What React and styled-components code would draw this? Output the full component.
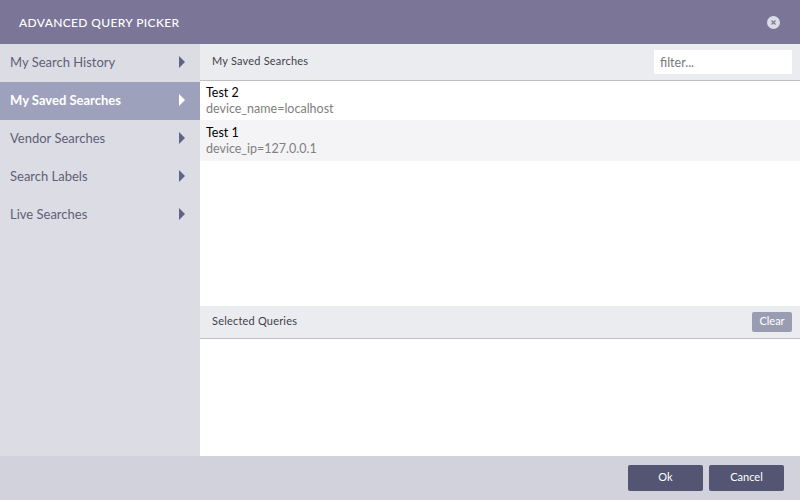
import React from 'react';
import styled, { createGlobalStyle } from 'styled-components'

const GlobalStyle = createGlobalStyle`
  html, body {
    margin: 0;
    padding: 0;
    background: #fff;
    font-family: Lato, "Liberation Sans", sans-serif;
  }
`

const Dialog = styled.div`
  width: 800px;
  height: 500px;
  display: flex;
  flex-direction: column;
  overflow: hidden;
`

const Header = styled.div`
  height: 44px;
  flex: none;
  display: flex;
  align-items: center;
  justify-content: space-between;
  padding: 0 20px 0 19px;
  background: #7b7698;
`

const Title = styled.h1`
  margin: 0;
  font-size: 12px;
  font-weight: 500;
  letter-spacing: 0.36px;
  color: #fff;
`

const CloseButton = styled.button`
  width: 13px;
  height: 13px;
  padding: 0;
  border: none;
  border-radius: 50%;
  background: #dcdce4;
  display: flex;
  align-items: center;
  justify-content: center;
`

const Body = styled.div`
  flex: 1;
  display: flex;
  min-height: 0;
`

const Sidebar = styled.ul`
  width: 200px;
  flex: none;
  margin: 0;
  padding: 0;
  list-style: none;
  background: #dcdce4;
`

const SidebarItem = styled.li`
  height: 38px;
  display: flex;
  align-items: center;
  justify-content: space-between;
  padding: 0 15px 2px 10px;
  box-sizing: border-box;
  font-size: 13px;
  font-weight: ${props => (props.$active ? 700 : 400)};
  color: ${props => (props.$active ? '#fff' : '#5f5f78')};
  background: ${props => (props.$active ? '#9ea1bb' : 'transparent')};
`

const Arrow = styled.span`
  width: 0;
  height: 0;
  margin-bottom: 1px;
  border-top: 6px solid transparent;
  border-bottom: 6px solid transparent;
  border-left: 6px solid ${props => (props.$active ? '#fff' : '#5d6488')};
`

const Content = styled.div`
  flex: 1;
  display: flex;
  flex-direction: column;
  min-width: 0;
`

const SavedPanel = styled.div`
  height: 262px;
  flex: none;
`

const SelectedPanel = styled.div`
  flex: 1;
`

const PanelBar = styled.div`
  height: ${props => props.$height}px;
  box-sizing: content-box;
  display: flex;
  align-items: center;
  justify-content: space-between;
  padding: 0 8px 0 12px;
  background: #ebecf0;
  border-bottom: 1px solid #bfbfbf;
`

const PanelTitle = styled.span`
  margin-bottom: 3px;
  font-size: 11px;
  letter-spacing: 0.2px;
  color: #3f3f4c;
`

const FilterInput = styled.input`
  width: 138px;
  height: 24px;
  box-sizing: border-box;
  padding: 0 6px;
  border: none;
  outline: none;
  background: #fff;
  font-family: inherit;
  font-size: 12.5px;
  color: #666;

  &::placeholder {
    color: #777;
    opacity: 1;
  }
`

const ClearButton = styled.button`
  width: 40px;
  height: 20px;
  padding: 0 0 3px;
  border: none;
  border-radius: 2px;
  background: #9a9cb1;
  color: #fff;
  font-family: inherit;
  font-size: 11px;
`

const SearchRow = styled.div`
  height: ${props => props.$height}px;
  box-sizing: border-box;
  padding: ${props => props.$top}px 6px 0;
  background: ${props => (props.$striped ? '#f4f4f6' : '#fff')};
`

const SearchName = styled.div`
  font-size: 12.5px;
  line-height: 16px;
  color: #000;
`

const SearchQuery = styled.div`
  font-size: 12.5px;
  line-height: 16px;
  color: #808080;
`

const Footer = styled.div`
  height: 44px;
  flex: none;
  display: flex;
  align-items: center;
  justify-content: flex-end;
  gap: 6px;
  padding-right: 16px;
  background: #d2d2dc;
`

const FooterButton = styled.button`
  width: 75px;
  height: 26px;
  padding: 0 0 3px;
  border: none;
  border-radius: 2px;
  background: #535572;
  color: #fff;
  font-family: inherit;
  font-size: 11px;
`

const menu = ['My Search History', 'My Saved Searches', 'Vendor Searches', 'Search Labels', 'Live Searches']

const searches = [
  { name: 'Test 2', query: 'device_name=localhost', height: 39, top: 4 },
  { name: 'Test 1', query: 'device_ip=127.0.0.1', height: 41, top: 5, striped: true },
]

export default function App() {
  return (
    <Dialog>
      <GlobalStyle />
      <Header>
        <Title>ADVANCED QUERY PICKER</Title>
        <CloseButton aria-label="Close">
          <svg width="5" height="5" viewBox="0 0 5 5">
            <path d="M0.5 0.5L4.5 4.5M4.5 0.5L0.5 4.5" stroke="#7b7698" strokeWidth="1.2" fill="none" />
          </svg>
        </CloseButton>
      </Header>
      <Body>
        <Sidebar>
          {menu.map((label) => (
            <SidebarItem key={label} $active={label === 'My Saved Searches'}>
              {label}
              <Arrow $active={label === 'My Saved Searches'} />
            </SidebarItem>
          ))}
        </Sidebar>
        <Content>
          <SavedPanel>
            <PanelBar $height={36}>
              <PanelTitle>My Saved Searches</PanelTitle>
              <FilterInput placeholder="filter..." />
            </PanelBar>
            {searches.map((search) => (
              <SearchRow key={search.name} $height={search.height} $top={search.top} $striped={search.striped}>
                <SearchName>{search.name}</SearchName>
                <SearchQuery>{search.query}</SearchQuery>
              </SearchRow>
            ))}
          </SavedPanel>
          <SelectedPanel>
            <PanelBar $height={32}>
              <PanelTitle>Selected Queries</PanelTitle>
              <ClearButton>Clear</ClearButton>
            </PanelBar>
          </SelectedPanel>
        </Content>
      </Body>
      <Footer>
        <FooterButton>Ok</FooterButton>
        <FooterButton>Cancel</FooterButton>
      </Footer>
    </Dialog>
  )
}
